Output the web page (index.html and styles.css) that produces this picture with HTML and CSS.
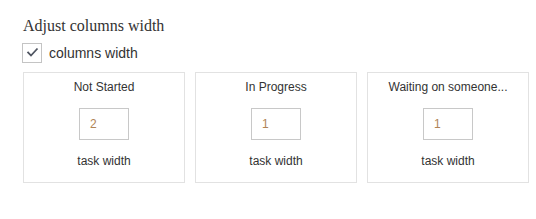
FILE: index.html
```html
<!DOCTYPE html>
<html>
<head>
<meta charset="utf-8">
<link rel="stylesheet" href="styles.css">
</head>
<body>
<div class="panel">
  <h2 class="title">Adjust columns width</h2>
  <label class="check-row">
    <span class="checkbox">
      <svg width="20" height="20" viewBox="0 0 20 20"><path d="M5.5 8.8 L9 12.5 L15.5 5.5" fill="none" stroke="#4f5561" stroke-width="1.8"/></svg>
    </span>
    <span class="check-label">columns width</span>
  </label>
  <div class="cards">
    <div class="card">
      <div class="card-title">Not Started</div>
      <div class="num-input">2</div>
      <div class="card-foot">task width</div>
    </div>
    <div class="card">
      <div class="card-title">In Progress</div>
      <div class="num-input">1</div>
      <div class="card-foot">task width</div>
    </div>
    <div class="card">
      <div class="card-title">Waiting on someone...</div>
      <div class="num-input">1</div>
      <div class="card-foot">task width</div>
    </div>
  </div>
</div>
</body>
</html>
```

FILE: styles.css
```css
html, body {
  margin: 0;
  padding: 0;
  background: #ffffff;
}
.panel {
  padding: 17px 0 0 23px;
}
.title {
  margin: 0;
  font-family: "Liberation Serif", serif;
  font-weight: normal;
  font-size: 16px;
  line-height: 18px;
  color: #333333;
}
.check-row {
  display: flex;
  align-items: center;
  margin: 8px 0 0 -1px;
  height: 20px;
}
.checkbox {
  width: 20px;
  height: 20px;
  box-sizing: border-box;
  border: 1px solid #c4c4c4;
  display: flex;
  align-items: center;
  justify-content: center;
}
.checkbox svg {
  display: block;
  flex: none;
}
.check-label {
  margin-left: 7px;
  font-family: "Liberation Sans", sans-serif;
  font-size: 14px;
  color: #333333;
}
.cards {
  display: flex;
  gap: 10px;
  margin-top: 9px;
}
.card {
  width: 162px;
  height: 111px;
  box-sizing: border-box;
  border: 1px solid #e2e2e2;
  padding-top: 7px;
  display: flex;
  flex-direction: column;
  align-items: center;
  font-family: "Liberation Sans", sans-serif;
  font-size: 12px;
  color: #333333;
}
.card-title,
.card-foot {
  line-height: 14px;
}
.num-input {
  margin: 14px 0;
  width: 50px;
  height: 32px;
  box-sizing: border-box;
  border: 1px solid #c8c8c8;
  padding-left: 10px;
  line-height: 30px;
  font-size: 12px;
  color: #b08456;
}
```
